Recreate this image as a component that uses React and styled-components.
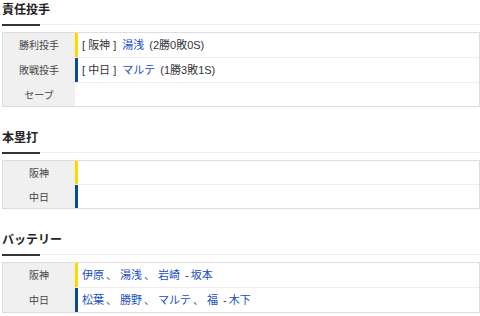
import React from 'react'
import styled, { createGlobalStyle } from 'styled-components'

const GlobalStyle = createGlobalStyle`
  html, body {
    margin: 0;
    padding: 0;
    background: #fff;
  }
  body {
    font-family: "Liberation Sans", Arial, "Noto Sans CJK JP", sans-serif;
    color: #333;
  }
`

const TEAM_COLORS = {
  tigers: '#ffd800',
  dragons: '#0d4a8c',
}

const Page = styled.div`
  padding: 0 0 0 2px;
`

const Section = styled.section`
  & + & {
    margin-top: 21px;
  }
`

const Heading = styled.h2`
  position: relative;
  margin: 0 0 7px;
  height: 24px;
  line-height: 18px;
  font-size: 12px;
  font-weight: bold;
  color: #222;
  border-bottom: 1px solid #eeeeee;
  font-family: "Noto Sans CJK JP", sans-serif;

  &::after {
    content: '';
    position: absolute;
    left: 0;
    bottom: -2px;
    width: 38px;
    height: 2px;
    background: #333;
  }
`

const Table = styled.div`
  border: 1px solid #dddddd;
`

const Row = styled.div`
  display: flex;
  border-bottom: 1px solid #eeeeee;

  &:last-child {
    border-bottom: none;
  }
`

const Label = styled.div`
  flex: 0 0 72px;
  padding: 4px 0;
  background: #f0f0f0;
  text-align: center;
  font-size: 10px;
  line-height: 15px;
  color: #444;
  font-family: "Noto Sans CJK JP", sans-serif;
`

const Bar = styled.div`
  flex: 0 0 3px;
  background: ${p => TEAM_COLORS[p.$team] || 'transparent'};
`

const Value = styled.div`
  flex: 1;
  padding: 4px 0 4px 4px;
  font-size: 11px;
  line-height: 16px;
  color: #333;
  white-space: nowrap;
`

const Team = styled.span`
  margin-right: 6px;
`

const Player = styled.a`
  color: #2150c0;
  text-decoration: none;
`

const Note = styled.span`
  margin-left: 5px;
`

const Sep = styled.span`
  color: #555;
  margin: 0 3px 0 2px;
`

const Dash = styled.span`
  margin: 0 2px 0 5px;
`

const pitchers = [
  { label: '勝利投手', team: 'tigers', teamName: '阪神', name: '湯浅', note: '(2勝0敗0S)' },
  { label: '敗戦投手', team: 'dragons', teamName: '中日', name: 'マルテ', note: '(1勝3敗1S)' },
  { label: 'セーブ' },
]

const battery = [
  { label: '阪神', team: 'tigers', pitchers: ['伊原', '湯浅', '岩崎'], catcher: '坂本' },
  { label: '中日', team: 'dragons', pitchers: ['松葉', '勝野', 'マルテ', '福'], catcher: '木下' },
]

function Battery({ pitchers, catcher }) {
  return (
    <>
      {pitchers.map((p, i) => (
        <React.Fragment key={p}>
          {i > 0 && <Sep>、</Sep>}
          <Player href="#">{p}</Player>
        </React.Fragment>
      ))}
      <Dash>-</Dash>
      <Player href="#">{catcher}</Player>
    </>
  )
}

export default function App() {
  return (
    <Page>
      <GlobalStyle />
      <Section>
        <Heading>責任投手</Heading>
        <Table>
          {pitchers.map(p => (
            <Row key={p.label}>
              <Label>{p.label}</Label>
              <Bar $team={p.team} />
              <Value>
                {p.name && (
                  <>
                    <Team>[ {p.teamName} ]</Team>
                    <Player href="#">{p.name}</Player>
                    <Note>{p.note}</Note>
                  </>
                )}
              </Value>
            </Row>
          ))}
        </Table>
      </Section>

      <Section>
        <Heading>本塁打</Heading>
        <Table>
          <Row>
            <Label>阪神</Label>
            <Bar $team="tigers" />
            <Value />
          </Row>
          <Row>
            <Label>中日</Label>
            <Bar $team="dragons" />
            <Value />
          </Row>
        </Table>
      </Section>

      <Section>
        <Heading>バッテリー</Heading>
        <Table>
          {battery.map(b => (
            <Row key={b.label}>
              <Label>{b.label}</Label>
              <Bar $team={b.team} />
              <Value>
                <Battery pitchers={b.pitchers} catcher={b.catcher} />
              </Value>
            </Row>
          ))}
        </Table>
      </Section>
    </Page>
  )
}
